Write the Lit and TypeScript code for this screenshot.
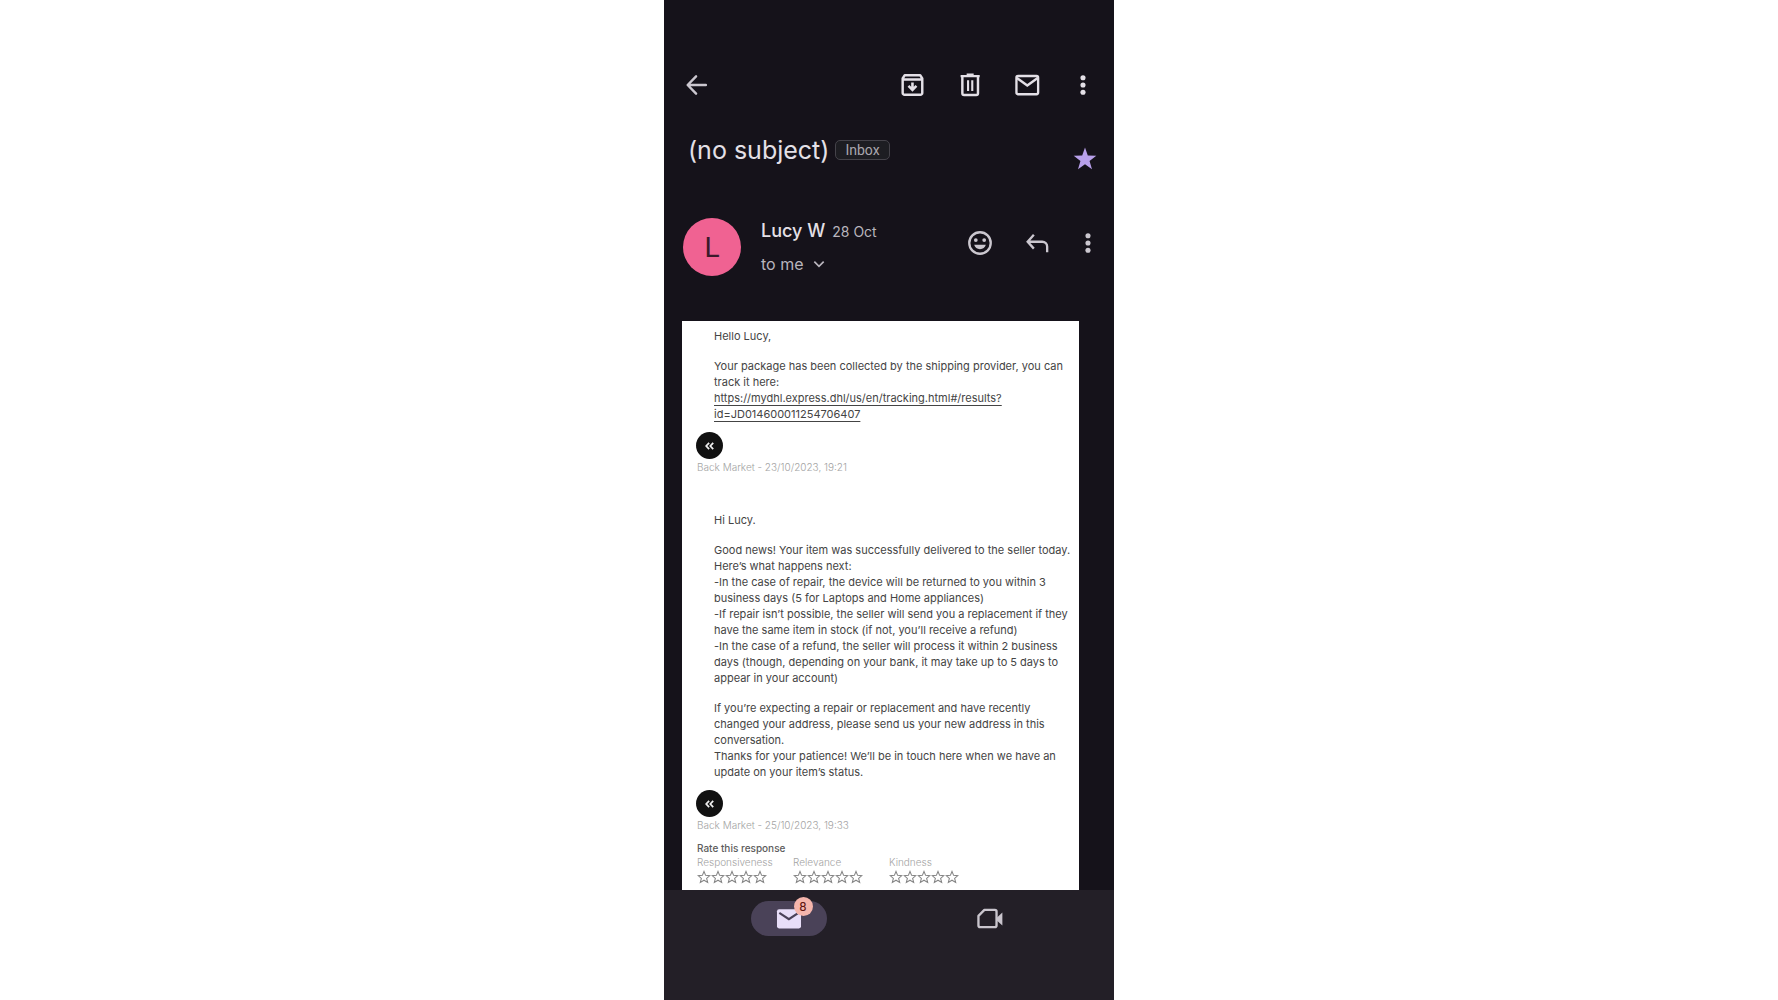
import { LitElement, html, css, svg } from "lit";
import { customElement, property } from "lit/decorators.js";

const icons = {
  back: svg`<path d="M19.600 12H4.600M11.200 4.600 4 12l7.200 7.400" fill="none" stroke="currentColor" stroke-width="2.100" stroke-linecap="round" stroke-linejoin="round"/>`,
  archive: svg`<path d="M4 6.400 5.800 3.600h13.200l1.800 2.800v12.400a1.600 1.600 0 0 1-1.600 1.600H5.600a1.600 1.600 0 0 1-1.600-1.600zM4 7.200h16.800" fill="none" stroke="currentColor" stroke-width="2.100" stroke-linejoin="round"/><path d="M12.400 9.800v6M9 12.800l3.400 3.400 3.400-3.400" fill="none" stroke="currentColor" stroke-width="2.200"/>`,
  trash: svg`<path d="M6.300 5v14a1.500 1.500 0 0 0 1.500 1.500h10.400a1.500 1.500 0 0 0 1.500-1.500V5M4.800 4.400h16.400M10 3.200h6" fill="none" stroke="currentColor" stroke-width="2.100"/><path d="M11.200 8v9.200M14.800 8v9.200" stroke="currentColor" stroke-width="1.800"/>`,
  mail: svg`<rect x="3.800" y="4.300" width="18.600" height="15.600" rx="1.400" fill="none" stroke="currentColor" stroke-width="2"/><path d="m4.200 6 8.900 6.400L22 6" fill="none" stroke="currentColor" stroke-width="2.100"/>`,
  more: svg`<circle cx="12" cy="5.800" r="2.200"/><circle cx="12" cy="12" r="2.200"/><circle cx="12" cy="18.200" r="2.200"/>`,
  star: svg`<path d="m12 2.200 2.400 6.900 7.300.200-5.800 4.400 2.100 7L12 16.600l-6 4.100 2.100-7-5.800-4.400 7.300-.200z"/>`,
  smile: svg`<circle cx="12" cy="12" r="9.200" fill="none" stroke="currentColor" stroke-width="2"/><circle cx="8.400" cy="9.500" r="1.600"/><circle cx="15.600" cy="9.500" r="1.600"/><path d="M7 13.600h10c-.600 2.300-2.500 3.800-5 3.800s-4.400-1.500-5-3.800z"/>`,
  reply: svg`<path d="M9.300 5 4 10.900l5.300 5.900M4.400 10.900h12.100a4.200 4.200 0 0 1 4.200 4.200v4.800" fill="none" stroke="currentColor" stroke-width="2"/>`,
  chevron: svg`<path d="m4 8 8 8 8-8" fill="none" stroke="currentColor" stroke-width="2.900"/>`,
  inbox: svg`<rect x="1.700" y="3.600" width="20.600" height="16.500" rx="1.800"/><path d="m3.700 6.800 8.200 5.400 8.200-5.400" fill="none" stroke="#4a4258" stroke-width="1.900"/>`,
  video: svg`<path d="M7.200 4.200h9a1.400 1.400 0 0 1 1.400 1.400v12a1.400 1.400 0 0 1-1.400 1.400H3.500A1.400 1.400 0 0 1 2.100 17.600V9.300z" fill="none" stroke="currentColor" stroke-width="2" stroke-linejoin="round"/><path d="M17.600 11.100 22.600 6.400v11.200L17.600 13.100z"/>`,
  chevrons: svg`<path d="M10.500 6.500 5.500 12l5 5.500M17.500 6.500 12.500 12l5 5.500" fill="none" stroke="currentColor" stroke-width="3"/>`,
  rate: svg`<path d="m12 2.500 2.800 6.700 7.200.500-5.500 4.700 1.800 7-6.300-3.900-6.300 3.900 1.800-7L2 9.700l7.200-.500z" fill="none" stroke="currentColor" stroke-width="1.800"/>`,
};

type IconName = keyof typeof icons;

@customElement("mail-icon")
class MailIcon extends LitElement {
  @property() name: IconName = "more";
  static styles = css`
    :host { display: block; width: 28px; height: 28px; flex: none; }
    svg { display: block; width: 100%; height: 100%; fill: currentColor; }
  `;
  render() {
    return html`<svg viewBox="0 0 24 24" aria-hidden="true">${icons[this.name]}</svg>`;
  }
}

@customElement("star-rating")
class StarRating extends LitElement {
  @property() label = "";
  static styles = css`
    .group { margin: 0; padding: 0; border: 0; min-width: 0; }
    .name { padding: 0; font-size: 10px; line-height: 14px; color: #a3a3a3; font-weight: 300; }
    .stars { display: flex; padding-top: 1px; }
    .star { position: relative; display: block; width: 14px; height: 14px; color: #858585; }
    .star input { position: absolute; inset: 0; width: 100%; height: 100%; margin: 0; opacity: 0; cursor: pointer; }
    .shape { width: 14px; height: 14px; }
  `;
  render() {
    return html`<fieldset class="group">
      <legend class="name">${this.label}</legend>
      <div class="stars">
        ${[1, 2, 3, 4, 5].map(
          (n) => html`<label class="star"
            ><input type="radio" name="score" value=${n} aria-label="${n} out of 5" /><mail-icon class="shape" name="rate"></mail-icon
          ></label>`
        )}
      </div>
    </fieldset>`;
  }
}

@customElement("app-root")
class AppRoot extends LitElement {
  static styles = css`
    :host { display: flex; justify-content: center; min-height: 100vh; background: #fff; font-family: Inter, "Liberation Sans", sans-serif; }
    * { box-sizing: border-box; }
    button { font: inherit; color: inherit; background: none; border: 0; padding: 0; margin: 0; cursor: pointer; }
    .screen { display: flex; flex-direction: column; width: 100%; max-width: 450px; background: #15121a; color: #e4e0e7; }
    .icon-button { display: grid; place-items: center; width: 40px; height: 40px; flex: none; }
    .toolbar { display: flex; align-items: center; justify-content: space-between; padding: 65px 11px 0 13px; }
    .back { color: #cbc7cf; }
    .actions { display: flex; gap: 17px; }
    .subject { display: flex; align-items: flex-start; padding: 29px 9px 0 24px; }
    .title { margin: 0; font-size: 25px; line-height: 32px; font-weight: 400; }
    .chip { margin: 6px auto 0 6px; padding: 0 9px; height: 20px; border: 1px solid #45434a; border-radius: 5px; background: #1d1d22; color: #aaa7ae; font-family: Roboto, sans-serif; font-size: 14px; line-height: 18px; }
    .starred { color: #b8a0ea; height: 50px; }
    .sender { display: flex; align-items: center; padding: 34px 6px 0 19px; }
    .avatar { display: grid; place-items: center; width: 58px; height: 58px; flex: none; border-radius: 50%; background: #f06292; color: #3b1a2b; font-family: Roboto, sans-serif; font-size: 28px; }
    .who { flex: 1; padding-left: 20px; }
    .from { display: flex; align-items: baseline; gap: 7px; line-height: 24px; }
    .name { font-size: 18px; font-weight: 500; }
    .date { font-size: 14px; color: #b9b5bd; }
    .to { display: flex; align-items: center; gap: 8px; line-height: 24px; padding-top: 8px; font-size: 16px; color: #b9b5bd; }
    .small { width: 14px; height: 14px; }
    .reply-actions { display: flex; gap: 17px; color: #cbc7cf; margin-right: 11px; padding-bottom: 8px; }
    .menu { color: #cbc7cf; padding-bottom: 8px; height: 48px; }
    .message { flex: 1; margin: 45px 35px 0 18px; padding: 7px 0 0 15px; background: #fff; color: #444; }
    .body { padding-left: 17px; font-size: 11px; line-height: 16px; white-space: nowrap; }
    .para { margin: 0 0 14px; }
    .para:last-child { margin: 0; }
    .link { color: inherit; text-decoration: underline; text-decoration-thickness: 1px; text-underline-offset: 3px; text-decoration-skip-ink: none; }
    .agent { display: grid; place-items: center; width: 27px; height: 27px; margin: 10px 0 0 -1px; border-radius: 50%; background: #111; color: #eee; }
    .meta { margin: 0; padding-top: 1px; font-size: 10px; line-height: 14px; font-weight: 300; color: #a3a3a3; }
    .second { padding-top: 38px; }
    .rate-title { margin: 0; padding-top: 9px; font-size: 10px; line-height: 14px; font-weight: 500; color: #5c5c5c; }
    .ratings { display: grid; grid-template-columns: repeat(3, 96px); }
    .nav { display: grid; grid-template-columns: 1fr 1fr; justify-items: center; align-items: start; height: 110px; padding: 11px 24px 0; background: #231f27; }
    .tab { position: relative; display: grid; place-items: center; width: 76px; height: 35px; border-radius: 18px; color: #c9c5cd; }
    .tab.active { background: #4a4258; color: #e8def8; }
    .badge { position: absolute; top: -4px; left: 43px; width: 19px; height: 19px; border-radius: 50%; background: #f5b5ac; color: #601410; font-family: Roboto, sans-serif; font-size: 13px; line-height: 19px; text-align: center; }
  `;

  private iconButton(name: IconName, label: string, extra = "") {
    return html`<button class="icon-button ${extra}" aria-label=${label}><mail-icon name=${name}></mail-icon></button>`;
  }

  private signature(stamp: string) {
    return html`<div class="agent"><mail-icon class="small" name="chevrons"></mail-icon></div>
      <p class="meta">Back Market - ${stamp}</p>`;
  }

  render() {
    return html`<main class="screen">
      <header class="toolbar">
        ${this.iconButton("back", "Back", "back")}
        <div class="actions">
          ${this.iconButton("archive", "Archive")} ${this.iconButton("trash", "Delete")}
          ${this.iconButton("mail", "Mark as unread")} ${this.iconButton("more", "More options")}
        </div>
      </header>
      <section class="subject">
        <h1 class="title">(no subject)</h1>
        <button class="chip">Inbox</button>
        ${this.iconButton("star", "Starred", "starred")}
      </section>
      <section class="sender">
        <div class="avatar">L</div>
        <div class="who">
          <div class="from"><span class="name">Lucy W</span><span class="date">28 Oct</span></div>
          <button class="to">to me<mail-icon class="small" name="chevron"></mail-icon></button>
        </div>
        <div class="reply-actions">${this.iconButton("smile", "Add reaction")}${this.iconButton("reply", "Reply")}</div>
        ${this.iconButton("more", "Message options", "menu")}
      </section>
      <article class="message">
        <div class="body">
          <p class="para">Hello Lucy,</p>
          <p class="para">
            Your package has been collected by the shipping provider, you can<br />track it here:<br />
            <a class="link" href="https://mydhl.express.dhl/us/en/tracking.html#/results?id=JD014600011254706407"
              >https://mydhl.express.dhl/us/en/tracking.html#/results?<br />id=JD014600011254706407</a>
          </p>
        </div>
        ${this.signature("23/10/2023, 19:21")}
        <div class="body second">
          <p class="para">Hi Lucy.</p>
          <p class="para">
            Good news! Your item was successfully delivered to the seller today.<br />Here’s what happens next:<br />
            -In the case of repair, the device will be returned to you within 3<br />business days (5 for Laptops and Home appliances)<br />
            -If repair isn’t possible, the seller will send you a replacement if they<br />have the same item in stock (if not, you’ll receive a refund)<br />
            -In the case of a refund, the seller will process it within 2 business<br />days (though, depending on your bank, it may take up to 5 days to<br />appear in your account)
          </p>
          <p class="para">
            If you’re expecting a repair or replacement and have recently<br />changed your address, please send us your new address in this<br />conversation.<br />
            Thanks for your patience! We’ll be in touch here when we have an<br />update on your item’s status.
          </p>
        </div>
        ${this.signature("25/10/2023, 19:33")}
        <h2 class="rate-title">Rate this response</h2>
        <div class="ratings">
          <star-rating label="Responsiveness"></star-rating>
          <star-rating label="Relevance"></star-rating>
          <star-rating label="Kindness"></star-rating>
        </div>
      </article>
      <nav class="nav">
        <button class="tab active" aria-label="Mail, 8 unread"><mail-icon name="inbox"></mail-icon><span class="badge">8</span></button>
        <button class="tab" aria-label="Meet"><mail-icon name="video"></mail-icon></button>
      </nav>
    </main>`;
  }
}
